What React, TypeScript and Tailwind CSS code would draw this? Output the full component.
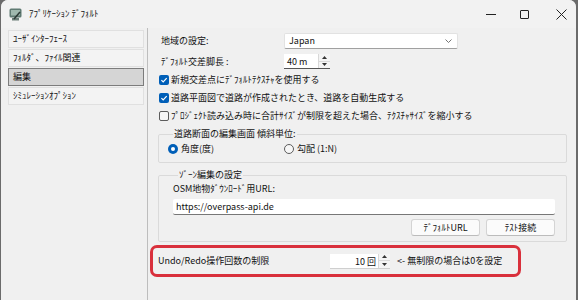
import React from 'react'

const font = { fontFamily: '"Noto Sans CJK JP", "Noto Sans", sans-serif' }

function CheckBox({ checked }: { checked?: boolean }) {
    if (!checked) {
        return <span className="w-[10px] h-[10px] rounded-[2px] border border-[#5c5c5c] bg-[#f7f7f7] shrink-0"></span>
    }
    return (
        <span className="w-[10px] h-[10px] rounded-[2px] bg-[#005fb8] flex items-center justify-center shrink-0">
            <svg width="8" height="8" viewBox="0 0 8 8">
                <path d="M1.4 4.1 L3.2 5.9 L6.7 2.1" stroke="white" strokeWidth="1.2" fill="none" />
            </svg>
        </span>
    )
}

function Radio({ checked }: { checked?: boolean }) {
    if (checked) {
        return (
            <span className="w-[10px] h-[10px] rounded-full bg-[#005fb8] flex items-center justify-center shrink-0">
                <span className="w-[4px] h-[4px] rounded-full bg-white"></span>
            </span>
        )
    }
    return <span className="w-[10px] h-[10px] rounded-full border border-[#5c5c5c] bg-[#f7f7f7] shrink-0"></span>
}

function SpinButtons() {
    return (
        <div className="w-[12px] h-full flex flex-col border-l border-[#d8d8d8] bg-[#f4f4f4]">
            <div className="flex-1 flex items-center justify-center border-b border-[#d8d8d8]">
                <svg width="5" height="3" viewBox="0 0 5 3"><path d="M0 3 L2.5 0 L5 3 Z" fill="#333" /></svg>
            </div>
            <div className="flex-1 flex items-center justify-center">
                <svg width="5" height="3" viewBox="0 0 5 3"><path d="M0 0 L2.5 3 L5 0 Z" fill="#333" /></svg>
            </div>
        </div>
    )
}

const navItems = ['ﾕｰｻﾞｲﾝﾀｰﾌｪｰｽ', 'ﾌｫﾙﾀﾞ、ﾌｧｲﾙ関連', '編集', 'ｼﾐｭﾚｰｼｮﾝｵﾌﾟｼｮﾝ']

export default function App() {
    return (
        <div className="w-[578px] h-[300px] bg-[#6b6b6b] overflow-hidden text-[9px] text-[#111]" style={font}>
            <div className="ml-[1px] w-[575px] h-[300px] bg-[#f0f0f0] rounded-t-[7px] flex flex-col">
                {/* Title bar */}
                <div className="h-[28px] flex items-center bg-[#f2f2f2] rounded-t-[7px]">
                    <div className="ml-[8px] w-[13px] h-[13px]">
                        <svg width="13" height="13" viewBox="0 0 13 13">
                            <rect x="0.5" y="0.5" width="12" height="9" rx="1.5" fill="#5f7a72" />
                            <rect x="2" y="2" width="9" height="5.5" fill="#9fb8ae" />
                            <rect x="3" y="10" width="7" height="2.5" fill="#6c7f79" />
                            <path d="M5 11 L11 4" stroke="#2d3a36" strokeWidth="1.6" />
                        </svg>
                    </div>
                    <span className="ml-[7px] leading-[12px]">ｱﾌﾟﾘｹｰｼｮﾝ ﾃﾞﾌｫﾙﾄ</span>
                    <div className="ml-auto flex items-center pr-[8px]">
                        <div className="w-[14px] h-[14px] flex items-center justify-center">
                            <div className="w-[10px] h-[1px] bg-[#222]"></div>
                        </div>
                        <div className="ml-[19px] w-[14px] h-[14px] flex items-center justify-center">
                            <div className="w-[9px] h-[9px] border border-[#222] rounded-[1px]"></div>
                        </div>
                        <div className="ml-[23px] w-[14px] h-[14px] flex items-center justify-center">
                            <svg width="11" height="11" viewBox="0 0 11 11">
                                <path d="M0.5 0.5 L10.5 10.5 M10.5 0.5 L0.5 10.5" stroke="#222" strokeWidth="1" />
                            </svg>
                        </div>
                    </div>
                </div>

                {/* Body */}
                <div className="flex flex-1">
                    {/* Left list */}
                    <div className="w-[147px] border-r border-[#bdbdbd] pl-[7px] pr-[3px] pt-[2px] flex flex-col gap-[1px]">
                        {navItems.map((item, i) => (
                            <div
                                key={item}
                                className={
                                    i === 2
                                        ? 'h-[18px] flex items-center pl-[4px] bg-[#d5d5d5] border border-[#7c7c7c]'
                                        : 'h-[18px] flex items-center pl-[4px] bg-[#f3f3f3] border border-[#e0e0e0]'
                                }
                            >
                                <span className="leading-[12px]">{item}</span>
                            </div>
                        ))}
                    </div>

                    {/* Right content */}
                    <div className="flex-1 flex flex-col pt-[5px]">
                        <div className="h-[16px] flex items-center pl-[13px]">
                            <span className="w-[123px] leading-[12px]">地域の設定:</span>
                            <div className="w-[174px] h-[16px] bg-white border border-[#e2e2e2] border-b-[#a0a0a0] rounded-[2px] flex items-center pl-[4px] pr-[5px]">
                                <span className="leading-[12px]">Japan</span>
                                <svg className="ml-auto" width="7" height="4" viewBox="0 0 7 4">
                                    <path d="M0.5 0.5 L3.5 3.5 L6.5 0.5" stroke="#666" strokeWidth="0.9" fill="none" />
                                </svg>
                            </div>
                        </div>
                        <div className="mt-[5px] h-[15px] flex items-center pl-[13px]">
                            <span className="w-[123px] leading-[12px]">ﾃﾞﾌｫﾙﾄ交差脚長 :</span>
                            <div className="w-[46px] h-[15px] bg-white border-b border-[#555] flex">
                                <span className="flex-1 pl-[3px] leading-[15px]">40 m</span>
                                <SpinButtons />
                            </div>
                        </div>
                        <div className="mt-[2px] h-[18px] flex items-center pl-[11px] gap-[2px]">
                            <CheckBox checked />
                            <span className="leading-[12px]">新規交差点にﾃﾞﾌｫﾙﾄﾃｸｽﾁｬを使用する</span>
                        </div>
                        <div className="h-[18px] flex items-center pl-[11px] gap-[2px]">
                            <CheckBox checked />
                            <span className="leading-[12px]">道路平面図で道路が作成されたとき、道路を自動生成する</span>
                        </div>
                        <div className="h-[18px] flex items-center pl-[11px] gap-[2px]">
                            <CheckBox />
                            <span className="leading-[12px]">ﾌﾟﾛｼﾞｪｸﾄ読み込み時に合計ｻｲｽﾞが制限を超えた場合、ﾃｸｽﾁｬｻｲｽﾞを縮小する</span>
                        </div>

                        <fieldset className="mt-[3px] ml-[10px] w-[409px] border border-[#dadada] rounded-[2px] px-[9px] pb-[4px]">
                            <legend className="ml-[5px] px-[1px] leading-[12px]">道路断面の編集画面 傾斜単位:</legend>
                            <div className="h-[18px] flex items-center">
                                <Radio checked />
                                <span className="ml-[3px] leading-[12px] w-[103px]">角度(度)</span>
                                <Radio />
                                <span className="ml-[3px] leading-[12px]">勾配 (1:N)</span>
                            </div>
                        </fieldset>

                        <fieldset className="mt-[6px] ml-[10px] w-[409px] border border-[#dadada] rounded-[2px] pl-[14px] pr-[11px] pb-[5px]">
                            <legend className="ml-[5px] px-[1px] leading-[12px]">ｿﾞｰﾝ編集の設定</legend>
                            <div className="h-[16px] flex items-center">
                                <span className="leading-[12px]">OSM地物ﾀﾞｳﾝﾛｰﾄﾞ用URL:</span>
                            </div>
                            <div className="mt-[2px] h-[16px] bg-white border-b border-[#777] rounded-[2px] flex items-center pl-[3px]">
                                <span className="leading-[12px]">https://overpass-api.de</span>
                            </div>
                            <div className="mt-[4px] flex justify-end gap-[6px]">
                                <div className="w-[69px] h-[17px] bg-[#fbfbfb] border border-[#d4d4d4] border-b-[#bcbcbc] rounded-[3px] flex items-center justify-center">
                                    <span className="leading-[12px]">ﾃﾞﾌｫﾙﾄURL</span>
                                </div>
                                <div className="w-[69px] h-[17px] bg-[#fbfbfb] border border-[#d4d4d4] border-b-[#bcbcbc] rounded-[3px] flex items-center justify-center">
                                    <span className="leading-[12px]">ﾃｽﾄ接続</span>
                                </div>
                            </div>
                        </fieldset>

                        <div className="mt-[3px] ml-[2px] w-[371px] h-[32px] border-[3px] border-[#d9303c] rounded-[7px] flex items-center pl-[5px]">
                            <span className="w-[172px] leading-[12px]">Undo/Redo操作回数の制限</span>
                            <div className="w-[60px] h-[15px] bg-white border-b border-[#cfcfcf] flex">
                                <span className="flex-1 text-right pr-[2px] leading-[15px]">10 回</span>
                                <SpinButtons />
                            </div>
                            <span className="ml-[7px] leading-[12px]">&lt;- 無制限の場合は0を設定</span>
                        </div>
                    </div>
                </div>
            </div>
        </div>
    )
}
